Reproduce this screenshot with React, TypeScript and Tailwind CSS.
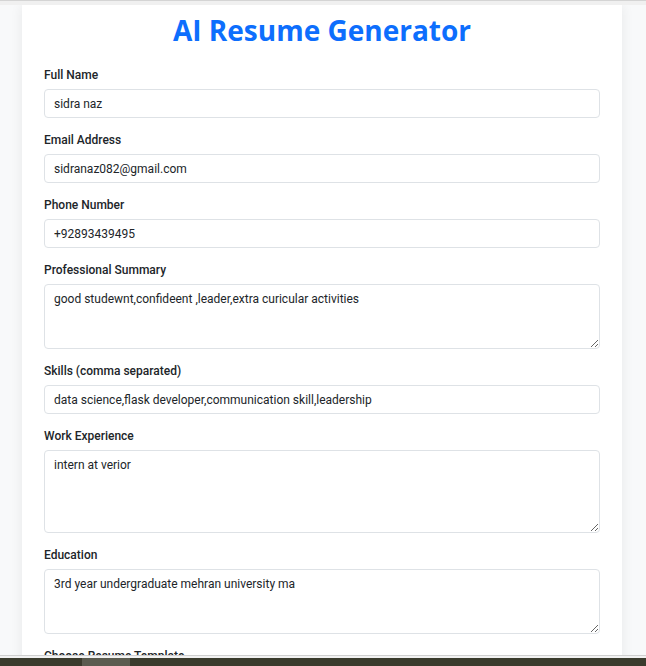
import React from "react";

const FIELDS = [
  { label: "Full Name", value: "sidra naz", kind: "input" },
  { label: "Email Address", value: "sidranaz082@gmail.com", kind: "input" },
  { label: "Phone Number", value: "+92893439495", kind: "input" },
  { label: "Professional Summary", value: "good studewnt,confideent ,leader,extra curicular activities", kind: "area", h: "h-[65px]" },
  { label: "Skills (comma separated)", value: "data science,flask developer,communication skill,leadership", kind: "input" },
  { label: "Work Experience", value: "intern at verior", kind: "area", h: "h-[83px]" },
  { label: "Education", value: "3rd year undergraduate mehran university ma", kind: "area", h: "h-[65px]" },
];

export default function App() {
  return (
    <div
      className="flex flex-col h-[666px] overflow-hidden bg-[#f8f9fa] text-[#212529]"
      style={{ fontFamily: 'Roboto, "Open Sans", sans-serif' }}
    >
      {/* browser chrome strip */}
      <div className="h-px bg-[#d4d4d4] shrink-0" />
      <div className="h-[4px] bg-[#f0f0f0] shrink-0" />

      <main className="flex-1 min-h-0 overflow-hidden">
        <div className="w-[600px] ml-[22px] bg-white shadow-[0_0_12px_rgba(0,0,0,0.07)] px-[22px] pb-6">
          <h1
            className="text-center text-[28px] font-bold text-[#0d6efd] leading-[36px] pt-[7px] mb-[20px]"
            style={{ fontFamily: '"Open Sans", sans-serif' }}
          >
            AI Resume Generator
          </h1>

          {FIELDS.map((f) => (
            <div key={f.label} className="mb-[15px]">
              <label className="block text-[12px] font-medium leading-[14px] mb-[7px]">{f.label}</label>
              {f.kind === "input" ? (
                <input
                  readOnly
                  value={f.value}
                  className="block w-full h-[29px] px-[9px] text-[12px] border border-[#dee2e6] rounded-[4px] bg-white outline-none"
                />
              ) : (
                <textarea
                  readOnly
                  value={f.value}
                  className={`block w-full ${f.h} px-[9px] pt-[6px] text-[12px] leading-[16px] border border-[#dee2e6] rounded-[4px] bg-white outline-none resize-y`}
                />
              )}
            </div>
          ))}

          <label className="block text-[12px] font-medium leading-[14px]">Choose Resume Template</label>
        </div>
      </main>

      {/* bottom edge: window frame + taskbar strip */}
      <div className="h-px bg-[#cfcfcf] shrink-0" />
      <div className="h-[2px] bg-[#f2f2f2] shrink-0" />
      <div className="h-[8px] bg-[#3a3b2d] shrink-0 flex">
        <div className="w-[82px]" />
        <div className="w-[48px] bg-[#5b5c50]" />
      </div>
    </div>
  );
}
